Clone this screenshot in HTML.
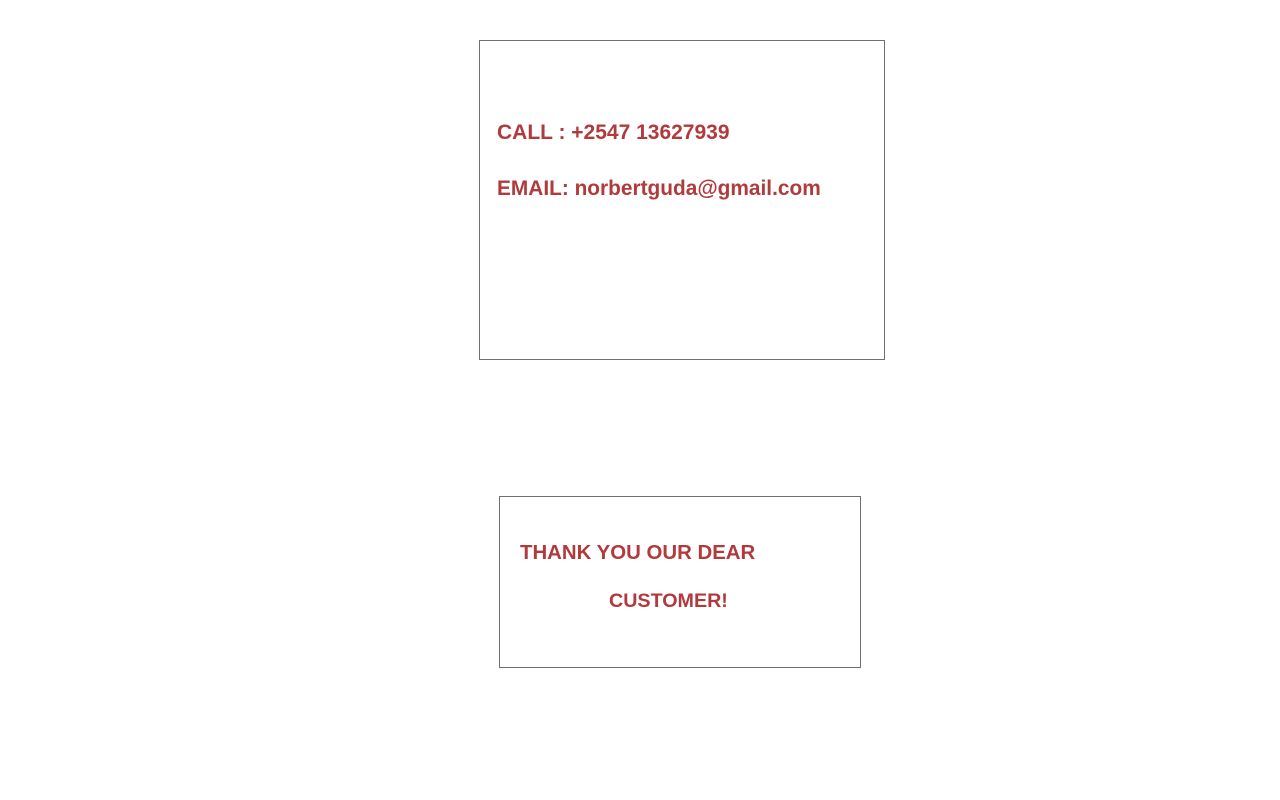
<!DOCTYPE html>
<html><head><style>
html,body{margin:0;padding:0;background:#fff;width:1280px;height:800px;overflow:hidden}
.box{position:absolute;border:1px solid #707070;box-sizing:border-box}
.t{position:absolute;font-family:"Liberation Sans",sans-serif;font-weight:bold;color:#b03a3c;font-size:21px;white-space:nowrap;line-height:24px}
</style></head><body>
<div class="box" style="left:479px;top:40px;width:406px;height:320px"></div>
<div class="t" style="left:497px;top:121px">CALL : +2547 13627939</div>
<div class="t" style="left:497px;top:177px;font-size:20.85px">EMAIL: norbertguda@gmail.com</div>
<div class="box" style="left:499px;top:496px;width:362px;height:172px"></div>
<div class="t" style="left:520px;top:541px;font-size:20.4px">THANK YOU OUR DEAR</div>
<div class="t" style="left:609px;top:589px;font-size:19.7px">CUSTOMER!</div>
</body></html>
